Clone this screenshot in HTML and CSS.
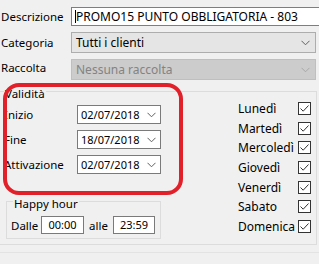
FILE: index.html
```html
<!DOCTYPE html>
<html lang="it">
<head>
  <meta charset="UTF-8" />
  <title>Promozione</title>
  <link rel="stylesheet" href="styles.css">
</head>
<body>
  <div class="form">
    <!-- Dati principali -->
    <div class="fields">
      <label class="field-label">Descrizione</label>
      <div class="textbox focused"><span class="caret"></span>PROMO15 PUNTO OBBLIGATORIA - 803</div>

      <label class="field-label">Categoria</label>
      <div class="combo">
        <span>Tutti i clienti</span>
        <svg class="chevron" width="9" height="6" viewBox="0 0 9 6"><path d="M0.5 0.8 L4.5 4.8 L8.5 0.8" fill="none" stroke="#606060" stroke-width="1"/></svg>
      </div>

      <label class="field-label raise">Raccolta</label>
      <div class="combo disabled">
        <span>Nessuna raccolta</span>
        <svg class="chevron" width="9" height="6" viewBox="0 0 9 6"><path d="M0.5 0.8 L4.5 4.8 L8.5 0.8" fill="none" stroke="#a8a8a8" stroke-width="1"/></svg>
      </div>
    </div>

    <!-- Validita -->
    <fieldset class="group validita">
      <legend>Validità</legend>
      <div class="validita-body">
        <div class="left-col">
          <div class="dates">
            <div class="date-row">
              <label>Inizio</label>
              <div class="datebox">02/07/2018<svg class="chevron" width="9" height="6" viewBox="0 0 9 6"><path d="M0.5 0.8 L4.5 4.8 L8.5 0.8" fill="none" stroke="#606060" stroke-width="1"/></svg></div>
            </div>
            <div class="date-row">
              <label>Fine</label>
              <div class="datebox">18/07/2018<svg class="chevron" width="9" height="6" viewBox="0 0 9 6"><path d="M0.5 0.8 L4.5 4.8 L8.5 0.8" fill="none" stroke="#606060" stroke-width="1"/></svg></div>
            </div>
            <div class="date-row">
              <label>Attivazione</label>
              <div class="datebox">02/07/2018<svg class="chevron" width="9" height="6" viewBox="0 0 9 6"><path d="M0.5 0.8 L4.5 4.8 L8.5 0.8" fill="none" stroke="#606060" stroke-width="1"/></svg></div>
            </div>
          </div>

          <fieldset class="group happy">
            <legend>Happy hour</legend>
            <div class="happy-row">
              <span>Dalle</span>
              <div class="timebox">00:00</div>
              <span class="alle">alle</span>
              <div class="timebox">23:59</div>
            </div>
          </fieldset>
        </div>

        <div class="days">
          <span>Lunedì</span><span class="check"><svg width="11" height="11" viewBox="0 0 11 11"><path d="M1.5 5.5 L4.2 8.2 L9.5 2.5" fill="none" stroke="#333" stroke-width="1"/></svg></span>
          <span>Martedì</span><span class="check"><svg width="11" height="11" viewBox="0 0 11 11"><path d="M1.5 5.5 L4.2 8.2 L9.5 2.5" fill="none" stroke="#333" stroke-width="1"/></svg></span>
          <span>Mercoledì</span><span class="check"><svg width="11" height="11" viewBox="0 0 11 11"><path d="M1.5 5.5 L4.2 8.2 L9.5 2.5" fill="none" stroke="#333" stroke-width="1"/></svg></span>
          <span>Giovedì</span><span class="check"><svg width="11" height="11" viewBox="0 0 11 11"><path d="M1.5 5.5 L4.2 8.2 L9.5 2.5" fill="none" stroke="#333" stroke-width="1"/></svg></span>
          <span>Venerdì</span><span class="check"><svg width="11" height="11" viewBox="0 0 11 11"><path d="M1.5 5.5 L4.2 8.2 L9.5 2.5" fill="none" stroke="#333" stroke-width="1"/></svg></span>
          <span>Sabato</span><span class="check"><svg width="11" height="11" viewBox="0 0 11 11"><path d="M1.5 5.5 L4.2 8.2 L9.5 2.5" fill="none" stroke="#333" stroke-width="1"/></svg></span>
          <span>Domenica</span><span class="check"><svg width="11" height="11" viewBox="0 0 11 11"><path d="M1.5 5.5 L4.2 8.2 L9.5 2.5" fill="none" stroke="#333" stroke-width="1"/></svg></span>
        </div>
      </div>
    </fieldset>

    <div class="bottom-line"></div>

    <!-- evidenziazione rossa -->
    <div class="annotation"></div>
  </div>
</body>
</html>
```

FILE: styles.css
```css
body {
  margin: 0;
  background-color: #f0f0f0;
  font-family: 'Noto Sans', sans-serif;
  font-size: 11.5px;
  color: #000;
  overflow: hidden;
}

.form {
  position: relative;
  width: 319px;
  height: 264px;
}

.fields {
  display: grid;
  grid-template-columns: 71px 1fr;
  grid-template-rows: 19px 21px 21px;
  row-gap: 6px;
  padding-top: 7px;
  padding-right: 3px;
}

.field-label {
  padding-left: 1px;
  align-self: center;
  line-height: 14px;
}

.field-label.raise {
  margin-top: -4px;
}

.textbox {
  box-sizing: border-box;
  background: #fff;
  border: 1px solid #3d8ed8;
  border-right: none;
  margin-right: -10px;
  padding-left: 3px;
  font-size: 12px;
  line-height: 17px;
  white-space: nowrap;
  display: flex;
  align-items: center;
}

.caret {
  width: 1px;
  height: 13px;
  background: #000;
}

.combo {
  box-sizing: border-box;
  display: flex;
  align-items: center;
  justify-content: space-between;
  background: #e5e5e5;
  border: 1px solid #adadad;
  padding: 0 5px 0 4px;
  font-size: 12px;
}

.combo.disabled {
  background: #cccccc;
  border-color: #bfbfbf;
  color: #838383;
}

.group {
  margin: 0;
  padding: 0;
  border: 1px solid #dcdcdc;
  min-width: 0;
}

.group legend {
  padding: 0 1px;
  line-height: 14px;
}

.validita {
  margin: 1px 2px 0 -2px;
  height: 164px;
  box-sizing: border-box;
}

.validita legend {
  margin-left: 5px;
  padding-top: 6px;
}

.validita-body {
  display: flex;
  justify-content: space-between;
}

.left-col {
  padding-top: 4px;
  padding-left: 5px;
}

.dates {
  display: flex;
  flex-direction: column;
  gap: 6px;
}

.date-row {
  display: flex;
  align-items: center;
}

.date-row label {
  width: 73px;
}

.datebox {
  box-sizing: border-box;
  width: 84px;
  height: 19px;
  background: #fff;
  border: 1px solid #7a7a7a;
  display: flex;
  align-items: center;
  justify-content: space-between;
  padding: 0 4px 0 3px;
  font-size: 11px;
}

.happy {
  margin: 17px 0 0 2px;
  width: 155px;
  box-sizing: border-box;
  padding: 0 0 4px 4px;
}

.happy legend {
  margin-left: 2px;
}

.happy-row {
  display: grid;
  grid-template-columns: 30px 43px 29px 42px;
  align-items: center;
  padding-top: 5px;
}

.alle {
  padding-left: 5px;
}

.timebox {
  box-sizing: border-box;
  height: 18px;
  background: #fff;
  border: 1px solid #7a7a7a;
  text-align: center;
  line-height: 16px;
  font-size: 11px;
}

.days {
  display: grid;
  grid-template-columns: 60px 13px;
  grid-auto-rows: 13px;
  row-gap: 6.7px;
  padding-top: 1px;
  padding-right: 5px;
  align-items: center;
  font-size: 12px;
}

.check {
  box-sizing: border-box;
  width: 13px;
  height: 13px;
  background: #fff;
  border: 1px solid #333;
  display: flex;
}

.bottom-line {
  margin-top: 7px;
  border-top: 1px solid #e3e3e3;
}

.annotation {
  position: absolute;
  left: 3px;
  top: 83px;
  width: 172px;
  height: 104px;
  border: 4px solid #e2202a;
  border-radius: 16px;
}
```
